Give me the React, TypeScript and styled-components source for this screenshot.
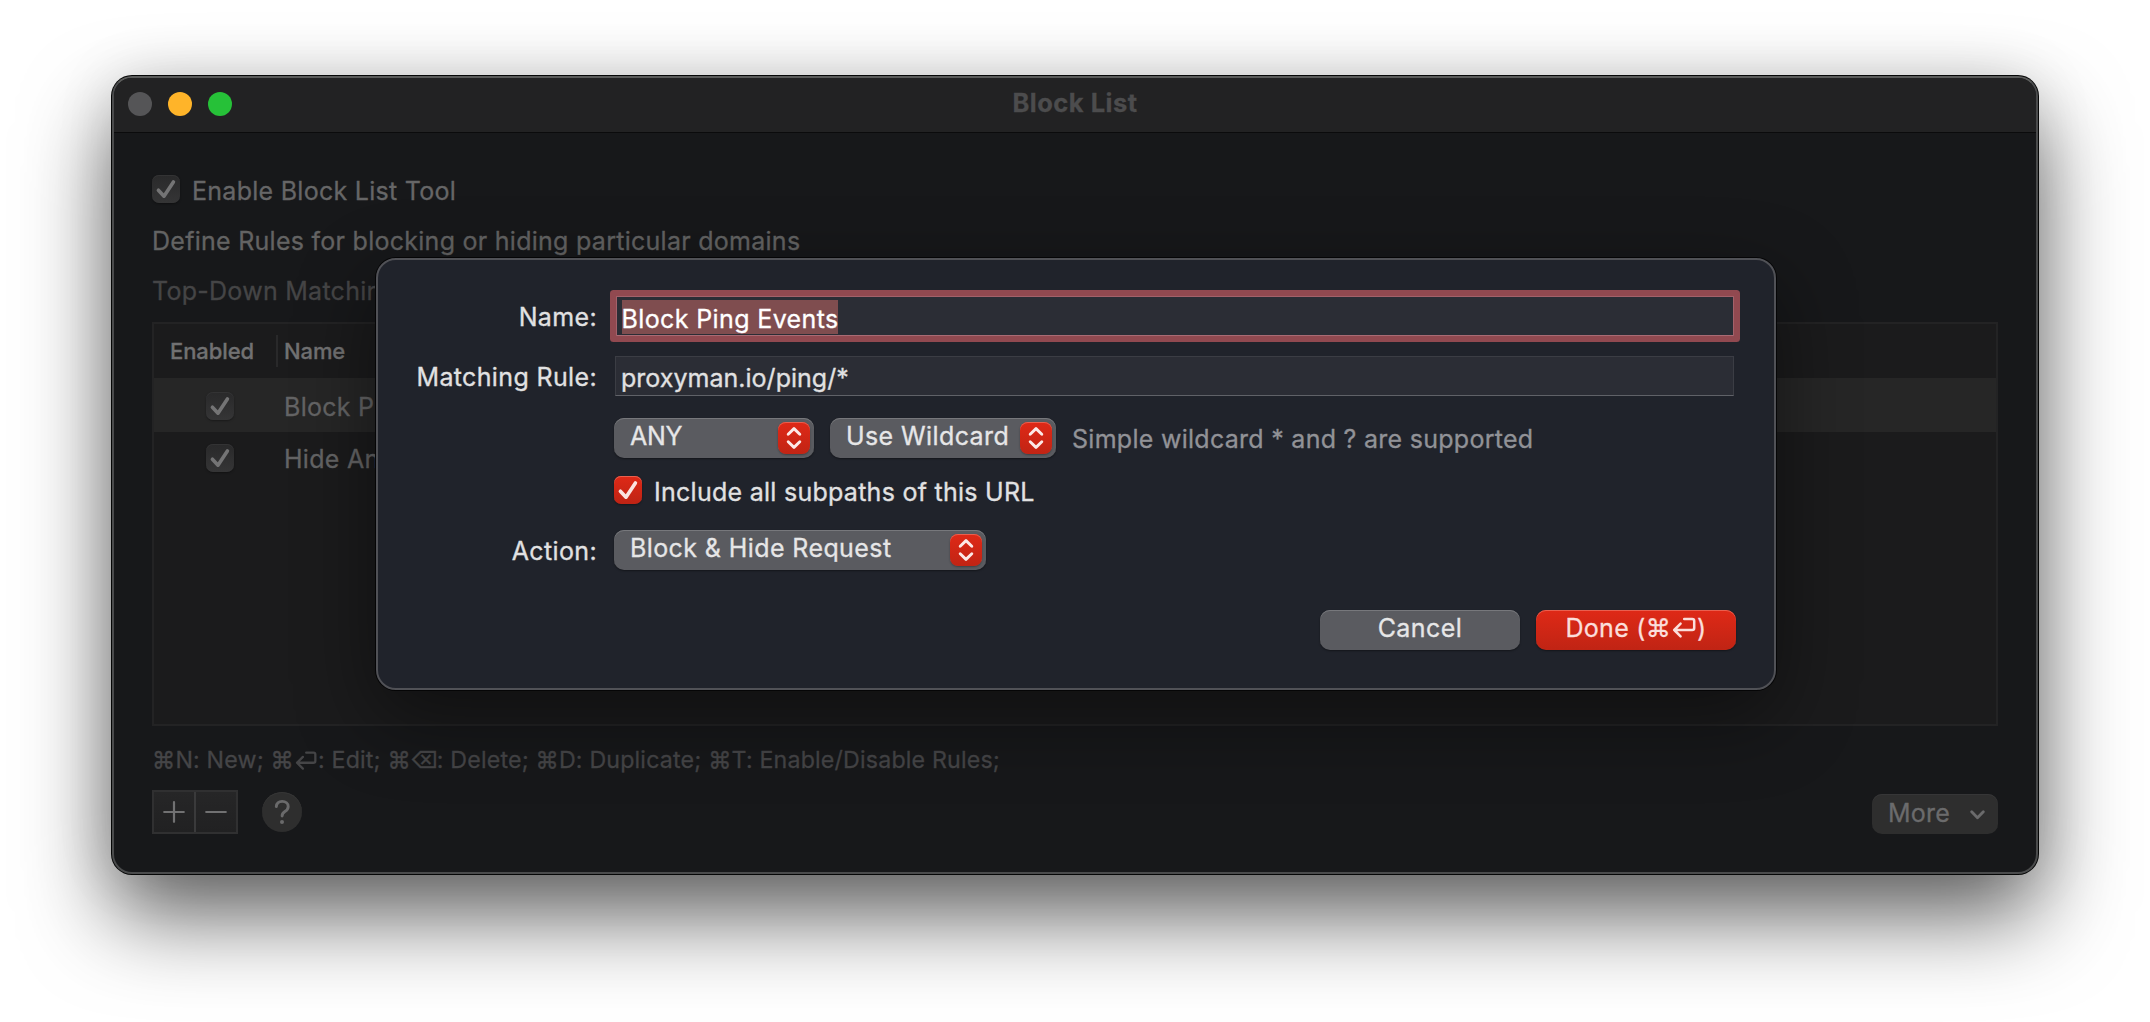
import React from 'react';
import styled, { createGlobalStyle } from 'styled-components';

const Global = createGlobalStyle`
  *, *::before, *::after { box-sizing: border-box; }
  body {
    margin: 0;
    background: #fff;
    font-family: Inter, "Liberation Sans", sans-serif;
    font-size: 25px;
    letter-spacing: 0.27px;
    -webkit-text-stroke: 0.3px currentColor;
    overflow: hidden;
  }
`;

const Desktop = styled.div`
  padding: 76px 0 0 112px;
  width: 2150px;
  height: 1022px;
  overflow: hidden;
`;

const Window = styled.div`
  position: relative;
  display: flex;
  flex-direction: column;
  width: 1926px;
  height: 798px;
  border: 2px solid #4a4b4c;
  border-top-color: #5a5b5a;
  border-radius: 20px;
  background: #17181a;
  box-shadow: 0 0 0 1px #050606, 0 42px 88px rgba(0, 0, 0, 0.62), 0 0 60px rgba(0, 0, 0, 0.1);
`;

const TitleBar = styled.header`
  display: grid;
  grid-template-columns: 1fr auto 1fr;
  height: 55px;
  padding: 0 14px;
  border-bottom: 1px solid #0b0b0c;
  border-radius: 18px 18px 0 0;
  background: #222223;
`;

const Lights = styled.div`
  display: flex;
  gap: 16px;
  padding-top: 14px;
`;

const Light = styled.i<{ $color: string }>`
  width: 24px;
  height: 24px;
  border-radius: 50%;
  background: ${(p) => p.$color};
`;

const Title = styled.h1`
  margin: 0;
  font-size: 25.5px;
  font-weight: 700;
  letter-spacing: 0.5px;
  line-height: 50px;
  color: #4c4c4d;
`;

const Body = styled.main`
  display: flex;
  flex-direction: column;
  padding: 42px 38px 0;
`;

const CheckLine = styled.label<{ $color: string }>`
  display: flex;
  align-items: flex-start;
  gap: 12px;
  height: 28px;
  line-height: 32px;
  color: ${(p) => p.$color};
  white-space: nowrap;
`;

const Box = styled.span<{ $accent?: boolean }>`
  display: flex;
  flex: none;
  width: 28px;
  height: 28px;
  border-radius: 7px;
  color: ${(p) => (p.$accent ? '#fbe3e0' : '#747475')};
  background: ${(p) =>
    p.$accent ? 'linear-gradient(#df2917, #be2314)' : 'linear-gradient(#29292a, #353536)'};
  box-shadow: inset 0 1px 0 ${(p) => (p.$accent ? '#e9604f' : '#333334')},
    0 1px 2px rgba(0, 0, 0, 0.35);
`;

const Line = styled.p<{ $color: string; $top: number }>`
  margin: ${(p) => p.$top}px 0 0;
  height: 28px;
  line-height: 28px;
  color: ${(p) => p.$color};
`;

const Table = styled.section`
  height: 404px;
  margin-top: 17px;
  border: 2px solid #232324;
  background: #1b1b1c;
`;

const HeaderRow = styled.div`
  display: grid;
  grid-template-columns: 124px 1fr;
  align-items: center;
  height: 54px;
  font-size: 22px;
  font-weight: 500;
  letter-spacing: -0.1px;
  color: #717172;
`;

const HeaderCell = styled.div<{ $first?: boolean }>`
  height: 32px;
  line-height: 33px;
  padding-left: ${(p) => (p.$first ? 16 : 6)}px;
  border-right: ${(p) => (p.$first ? '2px solid #29292a' : 'none')};
`;

const Row = styled.div<{ $selected?: boolean }>`
  display: grid;
  grid-template-columns: 124px 1fr;
  height: ${(p) => (p.$selected ? 54 : 50)}px;
  padding-top: ${(p) => (p.$selected ? 14 : 12)}px;
  background: ${(p) => (p.$selected ? '#262626' : 'transparent')};
  color: #646465;
`;

const BoxCell = styled.div`
  padding-left: 52px;
`;

const NameCell = styled.div`
  padding-left: 6px;
  line-height: 30px;
`;

const Shortcuts = styled.p`
  display: flex;
  height: 28px;
  margin: 20px 0 0;
  line-height: 28px;
  font-size: 23.2px;
  letter-spacing: 0.18px;
  color: #454547;
  white-space: pre;
`;

const DeleteGlyph = styled.span`
  margin: 0 -1.5px 0 -1px;
`;

const Footer = styled.footer`
  display: flex;
  align-items: center;
  height: 44px;
  margin-top: 16px;
`;

const Stepper = styled.div`
  display: grid;
  grid-template-columns: 40px 2px 40px;
  width: 86px;
  height: 44px;
  border: 2px solid #303031;
  background: linear-gradient(#262627, #212122);
  color: #717172;
`;

const StepperRule = styled.i`
  background: #3a3a3b;
`;

const StepButton = styled.button`
  display: flex;
  align-items: center;
  justify-content: center;
  padding: 0;
  border: 0;
  background: none;
  color: inherit;
`;

const Help = styled.button`
  display: flex;
  width: 40px;
  height: 40px;
  margin-left: 24px;
  padding: 0;
  border: 0;
  border-radius: 50%;
  background: #2e2e2e;
  box-shadow: inset 0 1px 0 #363636;
  color: #6a6a6b;
`;

const More = styled.button`
  display: flex;
  align-items: center;
  align-self: flex-end;
  justify-content: space-between;
  width: 126px;
  height: 40px;
  margin-left: auto;
  padding: 0 13px 0 16px;
  border: 0;
  border-radius: 10px;
  background: #2e2e2e;
  box-shadow: inset 0 1px 0 #363637;
  font: inherit;
  letter-spacing: 0.2px;
  line-height: 36px;
  color: #6b6b6c;
`;

const MoreText = styled.span`
  height: 38px;
`;

const Sheet = styled.form`
  position: absolute;
  left: 262px;
  top: 180px;
  display: flex;
  flex-direction: column;
  width: 1400px;
  height: 432px;
  padding: 36px 38px 0 0;
  border: 2px solid #505156;
  border-radius: 20px;
  background: #20232b;
  box-shadow: 0 0 0 1px #050506, 0 26px 80px rgba(0, 0, 0, 0.45);
  color: #e1e1e2;
`;

const FormRow = styled.div<{ $top?: number; $height?: number }>`
  display: grid;
  grid-template-columns: 219px 1fr;
  column-gap: 17px;
  height: ${(p) => p.$height ?? 40}px;
  margin-top: ${(p) => p.$top ?? 0}px;
`;

const Label = styled.label`
  grid-column: 1;
  height: 40px;
  line-height: 43px;
  letter-spacing: 0.36px;
  text-align: right;
`;

const Controls = styled.div`
  grid-column: 2;
  display: flex;
  gap: 16px;
`;

const Field = styled.div<{ $focused?: boolean }>`
  flex: 1;
  height: 40px;
  margin: ${(p) => (p.$focused ? '0 2px 0 2px' : '0 2px 0 1px')};
  padding-left: 5px;
  border: 1px solid ${(p) => (p.$focused ? '#a3616a' : '#3b3d44')};
  border-bottom-color: ${(p) => (p.$focused ? '#a96b74' : '#606268')};
  border-radius: ${(p) => (p.$focused ? 1 : 0)}px;
  background: #2b2d35;
  box-shadow: ${(p) => (p.$focused ? '0 0 0 6px #914950' : 'none')};
  letter-spacing: 0.02px;
  line-height: 43px;
`;

const Selection = styled.span`
  display: block;
  width: 216px;
  height: 34px;
  margin-top: 3px;
  background: #7f4d4f;
  color: #fff;
  letter-spacing: 0.38px;
  line-height: 38px;
  text-indent: -0.5px;
  white-space: nowrap;
`;

const PopUp = styled.button<{ $width: number; $track?: number }>`
  display: flex;
  align-items: center;
  justify-content: space-between;
  width: ${(p) => p.$width}px;
  height: 40px;
  padding: 0 4px 0 16px;
  border: 0;
  border-radius: 10px;
  background: #5a5b60;
  box-shadow: inset 0 1px 0 #77787c, 0 1px 2px rgba(0, 0, 0, 0.4);
  font: inherit;
  letter-spacing: ${(p) => p.$track ?? 0.4}px;
  color: #e6e6e7;
  white-space: nowrap;
`;

const PopUpText = styled.span`
  height: 40px;
  line-height: 37px;
`;

const Arrows = styled.span`
  display: flex;
  width: 32px;
  height: 32px;
  border-radius: 8px;
  background: linear-gradient(#df2917, #c12414);
  box-shadow: inset 0 1px 0 #e9604f, 0 1px 2px rgba(0, 0, 0, 0.3);
  color: #fce9e7;
`;

const Hint = styled.span`
  line-height: 43px;
  letter-spacing: 0.28px;
  color: #919297;
`;

const Actions = styled.div`
  display: flex;
  justify-content: flex-end;
  gap: 16px;
  margin-top: 40px;
`;

const PushButton = styled.button<{ $primary?: boolean }>`
  display: flex;
  justify-content: center;
  width: 200px;
  height: 40px;
  padding: 0;
  border: 0;
  border-radius: 10px;
  background: ${(p) => (p.$primary ? 'linear-gradient(#df2917, #c02414)' : '#5a5b60')};
  box-shadow: inset 0 1px 0 ${(p) => (p.$primary ? '#ea5f4f' : '#77787c')},
    0 1px 2px rgba(0, 0, 0, 0.4);
  font: inherit;
  letter-spacing: ${(p) => (p.$primary ? 0.3 : 0.45)}px;
  line-height: 37px;
  color: ${(p) => (p.$primary ? '#fbdedb' : '#e6e6e7')};
`;

const ReturnGlyph = styled.svg<{ $size: number; $drop: number }>`
  flex: none;
  width: ${(p) => p.$size}px;
  height: ${(p) => p.$size}px;
  margin: ${(p) => p.$drop}px 1px 0 1px;
`;

const Check = () => (
  <svg width="28" height="28" viewBox="0 0 28 28" fill="none">
    <path d="M6.4 15.2 12 21.2 21.4 7" stroke="currentColor" strokeWidth="3.6" strokeLinecap="round" strokeLinejoin="round" />
  </svg>
);

const UpDown = () => (
  <svg width="32" height="32" viewBox="0 0 32 32" fill="none" stroke="currentColor" strokeWidth="2.9" strokeLinecap="round" strokeLinejoin="round">
    <path d="M10.2 12.2 16 6.600l5.800 5.600M10.200 19.800l5.800 5.600 5.800-5.600" />
  </svg>
);

const Return = ({ size, drop }: { size: number; drop: number }) => (
  <ReturnGlyph $size={size} $drop={drop} viewBox="0 0 24 24" fill="none" stroke="currentColor" strokeWidth="2.5" strokeLinecap="round" strokeLinejoin="round">
    <path d="M12.2 4h8q2 0 2 2v7q0 2-2 2H2.2M8.6 8.6 2.2 15l6.4 6.4" />
  </ReturnGlyph>
);

const rules = [
  { name: 'Block Ping Events', selected: true },
  { name: 'Hide Analytics', selected: false },
];

export default function App() {
  return (
    <>
      <Global />
      <Desktop>
        <Window>
          <TitleBar>
            <Lights>
              <Light $color="#555557" />
              <Light $color="#ffb429" />
              <Light $color="#26c138" />
            </Lights>
            <Title>Block List</Title>
          </TitleBar>
          <Body>
            <CheckLine $color="#666667">
              <Box><Check /></Box>
              Enable Block List Tool
            </CheckLine>
            <Line $top={24} $color="#636363">Define Rules for blocking or hiding particular domains</Line>
            <Line $top={22} $color="#454546">Top-Down Matching</Line>
            <Table>
              <HeaderRow>
                <HeaderCell $first>Enabled</HeaderCell>
                <HeaderCell>Name</HeaderCell>
              </HeaderRow>
              {rules.map((rule) => (
                <Row key={rule.name} $selected={rule.selected}>
                  <BoxCell><Box><Check /></Box></BoxCell>
                  <NameCell>{rule.name}</NameCell>
                </Row>
              ))}
            </Table>
            <Shortcuts>
              <span>⌘N: New; ⌘</span>
              <Return size={22} drop={3} />
              <span>: Edit; ⌘</span>
              <DeleteGlyph>⌫</DeleteGlyph>
              <span>: Delete; ⌘D: Duplicate; ⌘T: Enable/Disable Rules;</span>
            </Shortcuts>
            <Footer>
              <Stepper>
                <StepButton type="button">
                  <svg width="22" height="22" viewBox="0 0 22 22" stroke="currentColor" strokeWidth="2.2" strokeLinecap="round">
                    <path d="M11 1.2v19.6M1.2 11h19.6" />
                  </svg>
                </StepButton>
                <StepperRule />
                <StepButton type="button">
                  <svg width="22" height="22" viewBox="0 0 22 22" stroke="currentColor" strokeWidth="2.2" strokeLinecap="round">
                    <path d="M1.2 11h19.6" />
                  </svg>
                </StepButton>
              </Stepper>
              <Help type="button">
                <svg width="40" height="40" viewBox="0 0 40 40" fill="none">
                  <path d="M14.3 14.6c.3-3.3 2.6-5.2 5.900-5.200 3.500 0 6 2 6 5 0 2.500-1.300 3.800-3.300 5.100-2.100 1.300-2.800 2.300-2.800 4.500" stroke="currentColor" strokeWidth="2.9" strokeLinecap="round" strokeLinejoin="round" />
                  <circle cx="20" cy="30" r="2" fill="currentColor" />
                </svg>
              </Help>
              <More type="button">
                <MoreText>More</MoreText>
                <svg width="15" height="11" viewBox="0 0 15 11" fill="none" stroke="currentColor" strokeWidth="2.8" strokeLinecap="round" strokeLinejoin="round">
                  <path d="M1.700 2.700 7.500 8.700l5.800-6" />
                </svg>
              </More>
            </Footer>
          </Body>
          <Sheet>
            <FormRow>
              <Label>Name:</Label>
              <Controls>
                <Field $focused><Selection>Block Ping Events</Selection></Field>
              </Controls>
            </FormRow>
            <FormRow $top={20}>
              <Label>Matching Rule:</Label>
              <Controls>
                <Field>proxyman.io/ping/*</Field>
              </Controls>
            </FormRow>
            <FormRow $top={22}>
              <Controls>
                <PopUp type="button" $width={200} $track={-0.3}><PopUpText>ANY</PopUpText><Arrows><UpDown /></Arrows></PopUp>
                <PopUp type="button" $width={226}><PopUpText>Use Wildcard</PopUpText><Arrows><UpDown /></Arrows></PopUp>
                <Hint>Simple wildcard * and ? are supported</Hint>
              </Controls>
            </FormRow>
            <FormRow $top={18} $height={28}>
              <Controls>
                <CheckLine $color="#e1e1e2">
                  <Box $accent><Check /></Box>
                  Include all subpaths of this URL
                </CheckLine>
              </Controls>
            </FormRow>
            <FormRow $top={26}>
              <Label>Action:</Label>
              <Controls>
                <PopUp type="button" $width={372}><PopUpText>Block &amp; Hide Request</PopUpText><Arrows><UpDown /></Arrows></PopUp>
              </Controls>
            </FormRow>
            <Actions>
              <PushButton type="button">Cancel</PushButton>
              <PushButton type="button" $primary>
                Done (⌘<Return size={24} drop={5} />)
              </PushButton>
            </Actions>
          </Sheet>
        </Window>
      </Desktop>
    </>
  );
}
